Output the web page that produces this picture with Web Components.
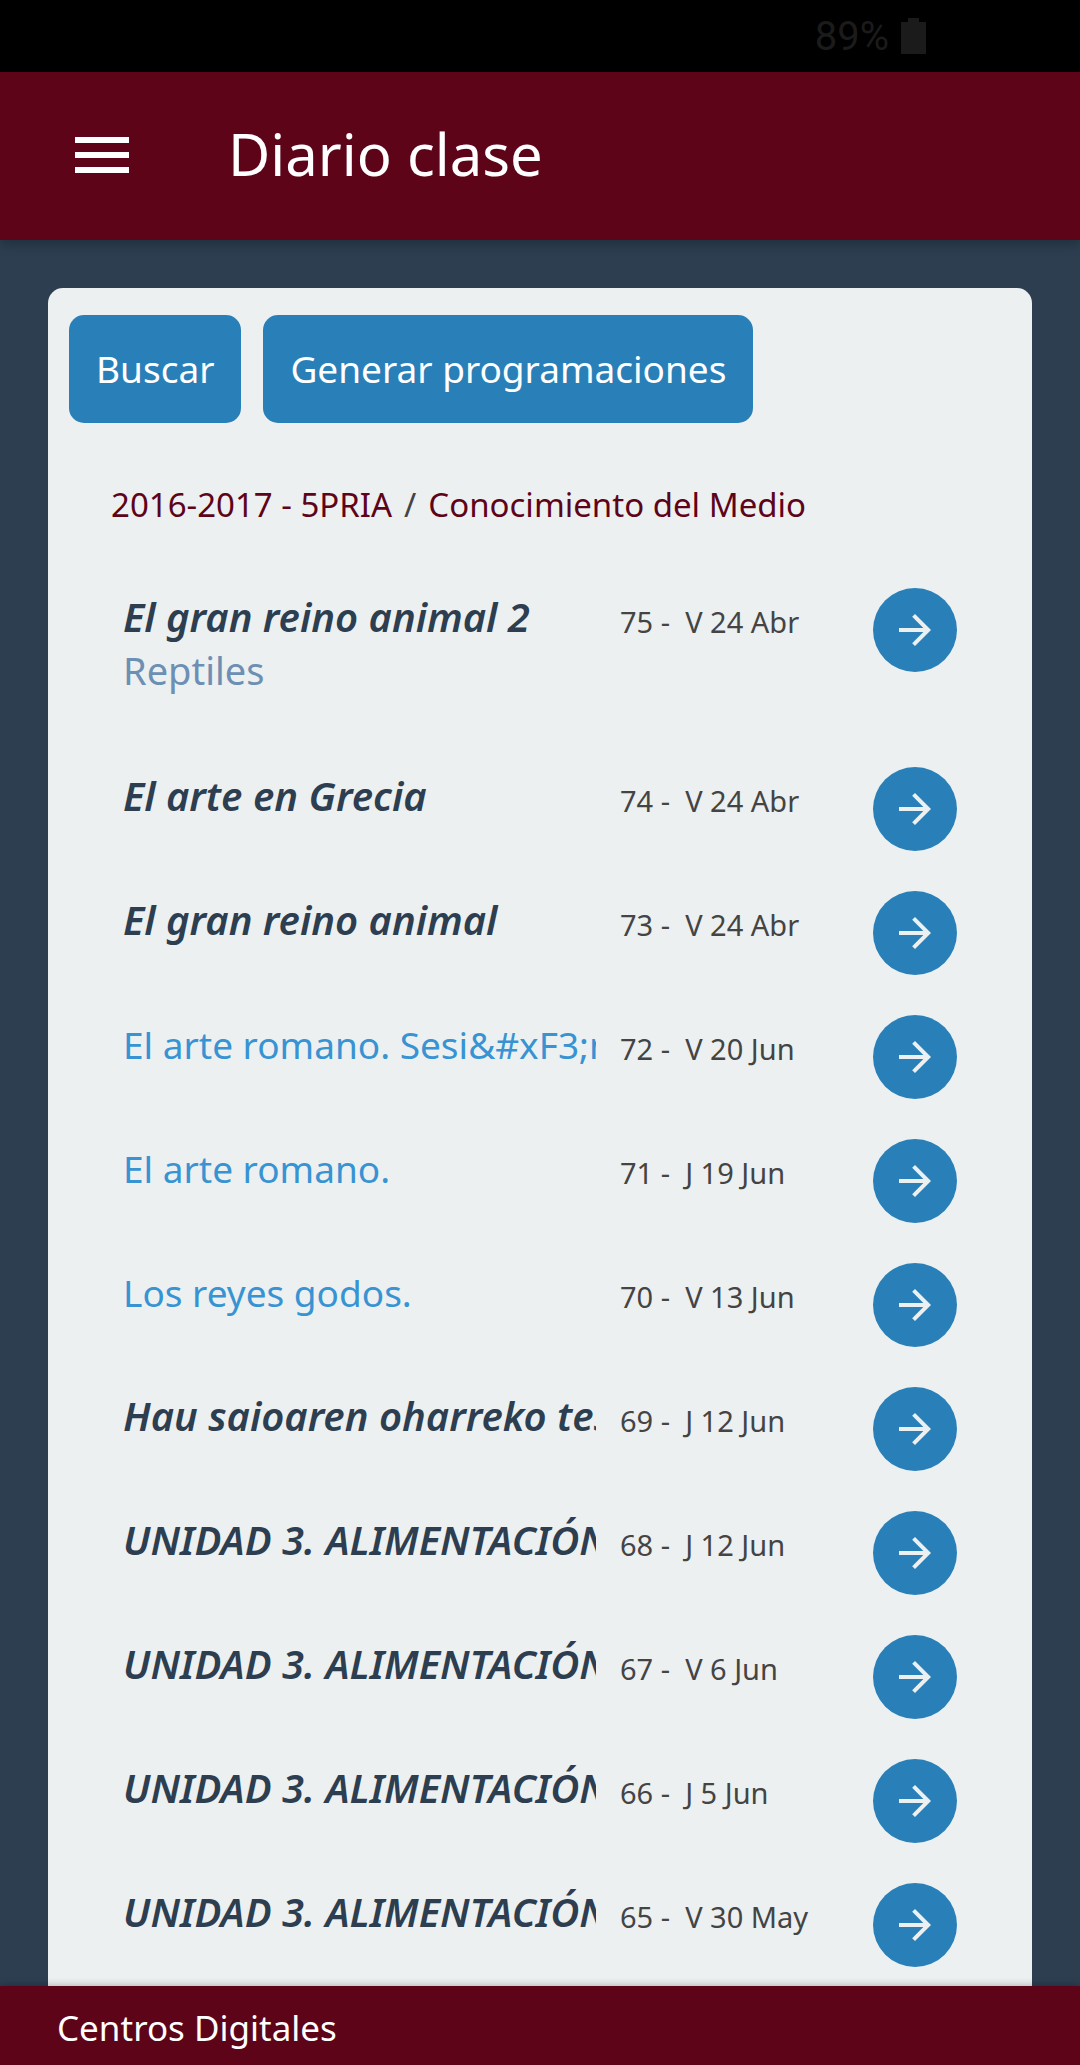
<!DOCTYPE html>
<html lang="es">

<head>
    <meta charset="UTF-8">
    <meta name="viewport" content="width=device-width, initial-scale=1">
    <title>Diario clase</title>
    <style>
        body {
            margin: 0;
            background: #2c3e50;
            font-family: "Noto Sans", "Open Sans", sans-serif;
        }
    </style>
</head>

<body>
    <diario-app>
        <status-bar slot="top" level="89%"></status-bar>
        <app-header slot="top">Diario clase</app-header>

        <action-bar>
            <action-button>Buscar</action-button>
            <action-button>Generar programaciones</action-button>
        </action-bar>

        <bread-crumb>
            <a slot="course" href="#curso">2016-2017 - 5PRIA</a>
            <a slot="subject" href="#asignatura">Conocimiento del Medio</a>
        </bread-crumb>

        <session-row number="75" date="V 24 Abr" strong>El gran reino animal 2<span slot="sub">Reptiles</span></session-row>
        <session-row number="74" date="V 24 Abr" strong>El arte en Grecia</session-row>
        <session-row number="73" date="V 24 Abr" strong>El gran reino animal</session-row>
        <session-row number="72" date="V 20 Jun">El arte romano. Sesi&amp;#xF3;n</session-row>
        <session-row number="71" date="J 19 Jun">El arte romano.</session-row>
        <session-row number="70" date="V 13 Jun">Los reyes godos.</session-row>
        <session-row number="69" date="J 12 Jun" strong>Hau saioaren oharreko tes</session-row>
        <session-row number="68" date="J 12 Jun" strong>UNIDAD 3. ALIMENTACIÓN</session-row>
        <session-row number="67" date="V 6 Jun" strong>UNIDAD 3. ALIMENTACIÓN</session-row>
        <session-row number="66" date="J 5 Jun" strong>UNIDAD 3. ALIMENTACIÓN</session-row>
        <session-row number="65" date="V 30 May" strong>UNIDAD 3. ALIMENTACIÓN</session-row>

        <app-footer slot="bottom">Centros Digitales</app-footer>
    </diario-app>
</body>

<script>
    // attaches an open shadow root filled with the given markup
    class BaseElement extends HTMLElement {
        constructor() {
            super();
            const template = document.createElement('template');
            template.innerHTML = this.constructor.markup;
            this.attachShadow({ mode: 'open' })
                .appendChild(template.content.cloneNode(true));
        }
    }

    class DiarioApp extends BaseElement {
        static markup = `
            <style>
                :host {
                    display: flex;
                    flex-direction: column;
                    height: 100vh;
                }

                main {
                    flex: 1;
                    min-height: 0;
                    padding: 48px 48px 0;
                    overflow-y: auto;
                    scrollbar-width: none;
                }

                section {
                    box-sizing: border-box;
                    min-height: 100%;
                    padding-top: 27px;
                    border-radius: 15px;
                    background: #ecf0f1;
                }
            </style>
            <slot name="top"></slot>
            <main><section><slot></slot></section></main>
            <slot name="bottom"></slot>
            `;
    }

    class StatusBar extends BaseElement {
        static markup = `
            <style>
                :host {
                    display: flex;
                    justify-content: flex-end;
                    align-items: center;
                    gap: 12px;
                    height: 72px;
                    padding-right: 154px;
                    background: #000;
                    color: #1b1b1b;
                    font: 40px Roboto, sans-serif;
                }
            </style>
            <span></span>
            <svg width="25" height="36" viewBox="0 0 25 36" fill="currentColor" aria-hidden="true">
                <path d="M7 0h11v4h7v32H0V4h7z"/>
            </svg>
            `;

        connectedCallback() {
            this.shadowRoot.querySelector('span').textContent = this.getAttribute('level');
        }
    }

    class AppHeader extends BaseElement {
        static markup = `
            <style>
                :host {
                    display: flex;
                    box-sizing: border-box;
                    align-items: center;
                    gap: 90px;
                    height: 168px;
                    padding: 0 0 2px 66px;
                    position: relative;
                    z-index: 1;
                    background: #5d0419;
                    color: #fff;
                    box-shadow: 0 3px 12px rgba(0, 0, 0, .3);
                }

                button {
                    display: flex;
                    padding: 0;
                    border: 0;
                    background: none;
                    color: inherit;
                }

                h1 {
                    margin: 0;
                    padding-bottom: 4px;
                    font-size: 58px;
                    font-weight: 400;
                }
            </style>
            <button aria-label="Menú">
                <svg width="72" height="72" viewBox="0 0 24 24" fill="currentColor" aria-hidden="true">
                    <path d="M3 18h18v-2H3v2zm0-5h18v-2H3v2zm0-7v2h18V6H3z"/>
                </svg>
            </button>
            <h1><slot></slot></h1>
            `;
    }

    class ActionBar extends BaseElement {
        static markup = `
            <style>
                :host {
                    display: flex;
                    flex-wrap: wrap;
                    gap: 22px;
                    padding: 0 21px;
                }
            </style>
            <slot></slot>
            `;
    }

    class ActionButton extends BaseElement {
        static markup = `
            <style>
                :host {
                    display: block;
                }

                button {
                    height: 108px;
                    padding: 0 27px 2px;
                    border: 0;
                    border-radius: 15px;
                    background: #2980b9;
                    color: #fff;
                    font: inherit;
                    font-size: 37px;
                }
            </style>
            <button><slot></slot></button>
            `;
    }

    class BreadCrumb extends BaseElement {
        static markup = `
            <style>
                :host {
                    display: block;
                    padding: 56px 63px 57px;
                    color: #444;
                    font-size: 33px;
                    line-height: 52px;
                    white-space: nowrap;
                }

                nav {
                    display: flex;
                    gap: 12px;
                }

                ::slotted(a) {
                    color: #5d0419;
                    text-decoration: none;
                }
            </style>
            <nav><slot name="course"></slot><span>/</span><slot name="subject"></slot></nav>
            `;
    }

    class SessionRow extends BaseElement {
        static markup = `
            <style>
                :host {
                    display: grid;
                    grid-template-columns: minmax(0, 1fr) 229px 84px;
                    column-gap: 24px;
                    align-items: start;
                    padding: 0 75px 40px;
                }

                .text {
                    padding-bottom: 28px;
                    overflow: hidden;
                    color: #3893d3;
                    font-size: 37px;
                    line-height: 52px;
                    white-space: nowrap;
                }

                .title {
                    padding-top: 4px;
                }

                :host([strong]) .title {
                    padding: 3px 0 1px;
                    color: #2c3e50;
                    font-size: 40px;
                    font-style: italic;
                    font-weight: 600;
                }

                ::slotted([slot="sub"]) {
                    display: block;
                    padding-bottom: 3px;
                    color: #6d8fb3;
                    font-size: 38px;
                }

                .date {
                    color: #444;
                    font-size: 29px;
                    line-height: 68px;
                    white-space: pre;
                }

                a {
                    display: flex;
                    justify-content: center;
                    align-items: center;
                    height: 84px;
                    border-radius: 50%;
                    background: #2980b9;
                    color: #ecf0f1;
                }
            </style>
            <div class="text">
                <div class="title"><slot></slot></div>
                <slot name="sub"></slot>
            </div>
            <div class="date"></div>
            <a aria-label="Abrir">
                <svg width="48" height="48" viewBox="0 0 24 24" fill="currentColor" aria-hidden="true">
                    <path d="M12 4l-1.41 1.41L16.17 11H4v2h12.17l-5.58 5.59L12 20l8-8z"/>
                </svg>
            </a>
            `;

        connectedCallback() {
            const number = this.getAttribute('number');
            this.shadowRoot.querySelector('.date').textContent = `${number} -  ${this.getAttribute('date')}`;
            this.shadowRoot.querySelector('a').href = `#sesion-${number}`;
        }
    }

    class AppFooter extends BaseElement {
        static markup = `
            <style>
                :host {
                    display: block;
                    padding: 16px 57px 11px;
                    position: relative;
                    z-index: 1;
                    background: #5d0419;
                    color: #fff;
                    font-size: 35px;
                    line-height: 52px;
                    box-shadow: 0 0 8px rgba(0, 0, 0, .3);
                }
            </style>
            <slot></slot>
            `;
    }

    window.customElements.define('diario-app', DiarioApp);
    window.customElements.define('status-bar', StatusBar);
    window.customElements.define('app-header', AppHeader);
    window.customElements.define('action-bar', ActionBar);
    window.customElements.define('action-button', ActionButton);
    window.customElements.define('bread-crumb', BreadCrumb);
    window.customElements.define('session-row', SessionRow);
    window.customElements.define('app-footer', AppFooter);

</script>

</html>
